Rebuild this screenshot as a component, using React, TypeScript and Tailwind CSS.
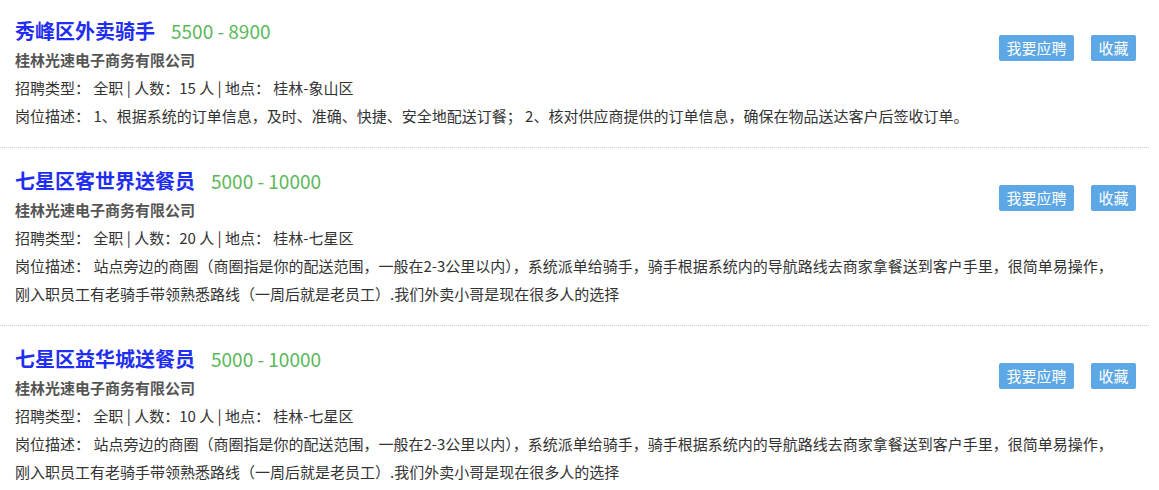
import React from 'react';

interface Job {
  title: string;
  salary: string;
  company: string;
  count: number;
  place: string;
  desc: string;
}

const jobs: Job[] = [
  {
    title: '秀峰区外卖骑手',
    salary: '5500 - 8900',
    company: '桂林光速电子商务有限公司',
    count: 15,
    place: '桂林-象山区',
    desc: '1、根据系统的订单信息，及时、准确、快捷、安全地配送订餐； 2、核对供应商提供的订单信息，确保在物品送达客户后签收订单。',
  },
  {
    title: '七星区客世界送餐员',
    salary: '5000 - 10000',
    company: '桂林光速电子商务有限公司',
    count: 20,
    place: '桂林-七星区',
    desc: '站点旁边的商圈（商圈指是你的配送范围，一般在2-3公里以内），系统派单给骑手，骑手根据系统内的导航路线去商家拿餐送到客户手里，很简单易操作，刚入职员工有老骑手带领熟悉路线（一周后就是老员工）.我们外卖小哥是现在很多人的选择',
  },
  {
    title: '七星区益华城送餐员',
    salary: '5000 - 10000',
    company: '桂林光速电子商务有限公司',
    count: 10,
    place: '桂林-七星区',
    desc: '站点旁边的商圈（商圈指是你的配送范围，一般在2-3公里以内），系统派单给骑手，骑手根据系统内的导航路线去商家拿餐送到客户手里，很简单易操作，刚入职员工有老骑手带领熟悉路线（一周后就是老员工）.我们外卖小哥是现在很多人的选择',
  },
];

const JobItem: React.FC<{ job: Job; first: boolean }> = ({ job, first }) => (
  <div
    className={`flow-root pl-[15px] pr-[13px] pb-[17px] ${
      first ? 'pt-4' : 'pt-[18px] border-t border-dotted border-[#cccccc]'
    }`}
  >
    {/* buttons float at the top right, the text runs under them */}
    <div className="float-right flex gap-[17px] mt-[19px]">
      <button className="h-[26px] px-[7.5px] rounded-[2px] bg-[#5ca7e4] text-white text-[15px] leading-[26px]">
        我要应聘
      </button>
      <button className="h-[26px] px-[7.5px] rounded-[2px] bg-[#5ca7e4] text-white text-[15px] leading-[26px]">
        收藏
      </button>
    </div>
    <div className="flex items-center h-[30px]">
      <span className="text-[20px] font-bold text-[#1f2ef2] leading-[30px]">{job.title}</span>
      <span className="ml-4 text-[19px] text-[#5cb85c] leading-[30px]">{job.salary}</span>
    </div>
    <div className="text-[15px] font-bold text-[#555555] leading-[28px]">{job.company}</div>
    <div className="text-[15px] text-[#333333] leading-[28px]">
      招聘类型：&nbsp;全职 | 人数：{job.count} 人 | 地点：&nbsp;{job.place}
    </div>
    <div className="text-[15px] text-[#333333] leading-[28px] max-w-[1105px]">
      岗位描述：&nbsp;{job.desc}
    </div>
  </div>
);

export default function App() {
  return (
    <div
      className="w-[1149px] bg-white"
      style={{ fontFamily: '"Noto Sans CJK SC", "Noto Sans", sans-serif' }}
    >
      {jobs.map((job, i) => (
        <JobItem key={i} job={job} first={i === 0} />
      ))}
    </div>
  );
}
